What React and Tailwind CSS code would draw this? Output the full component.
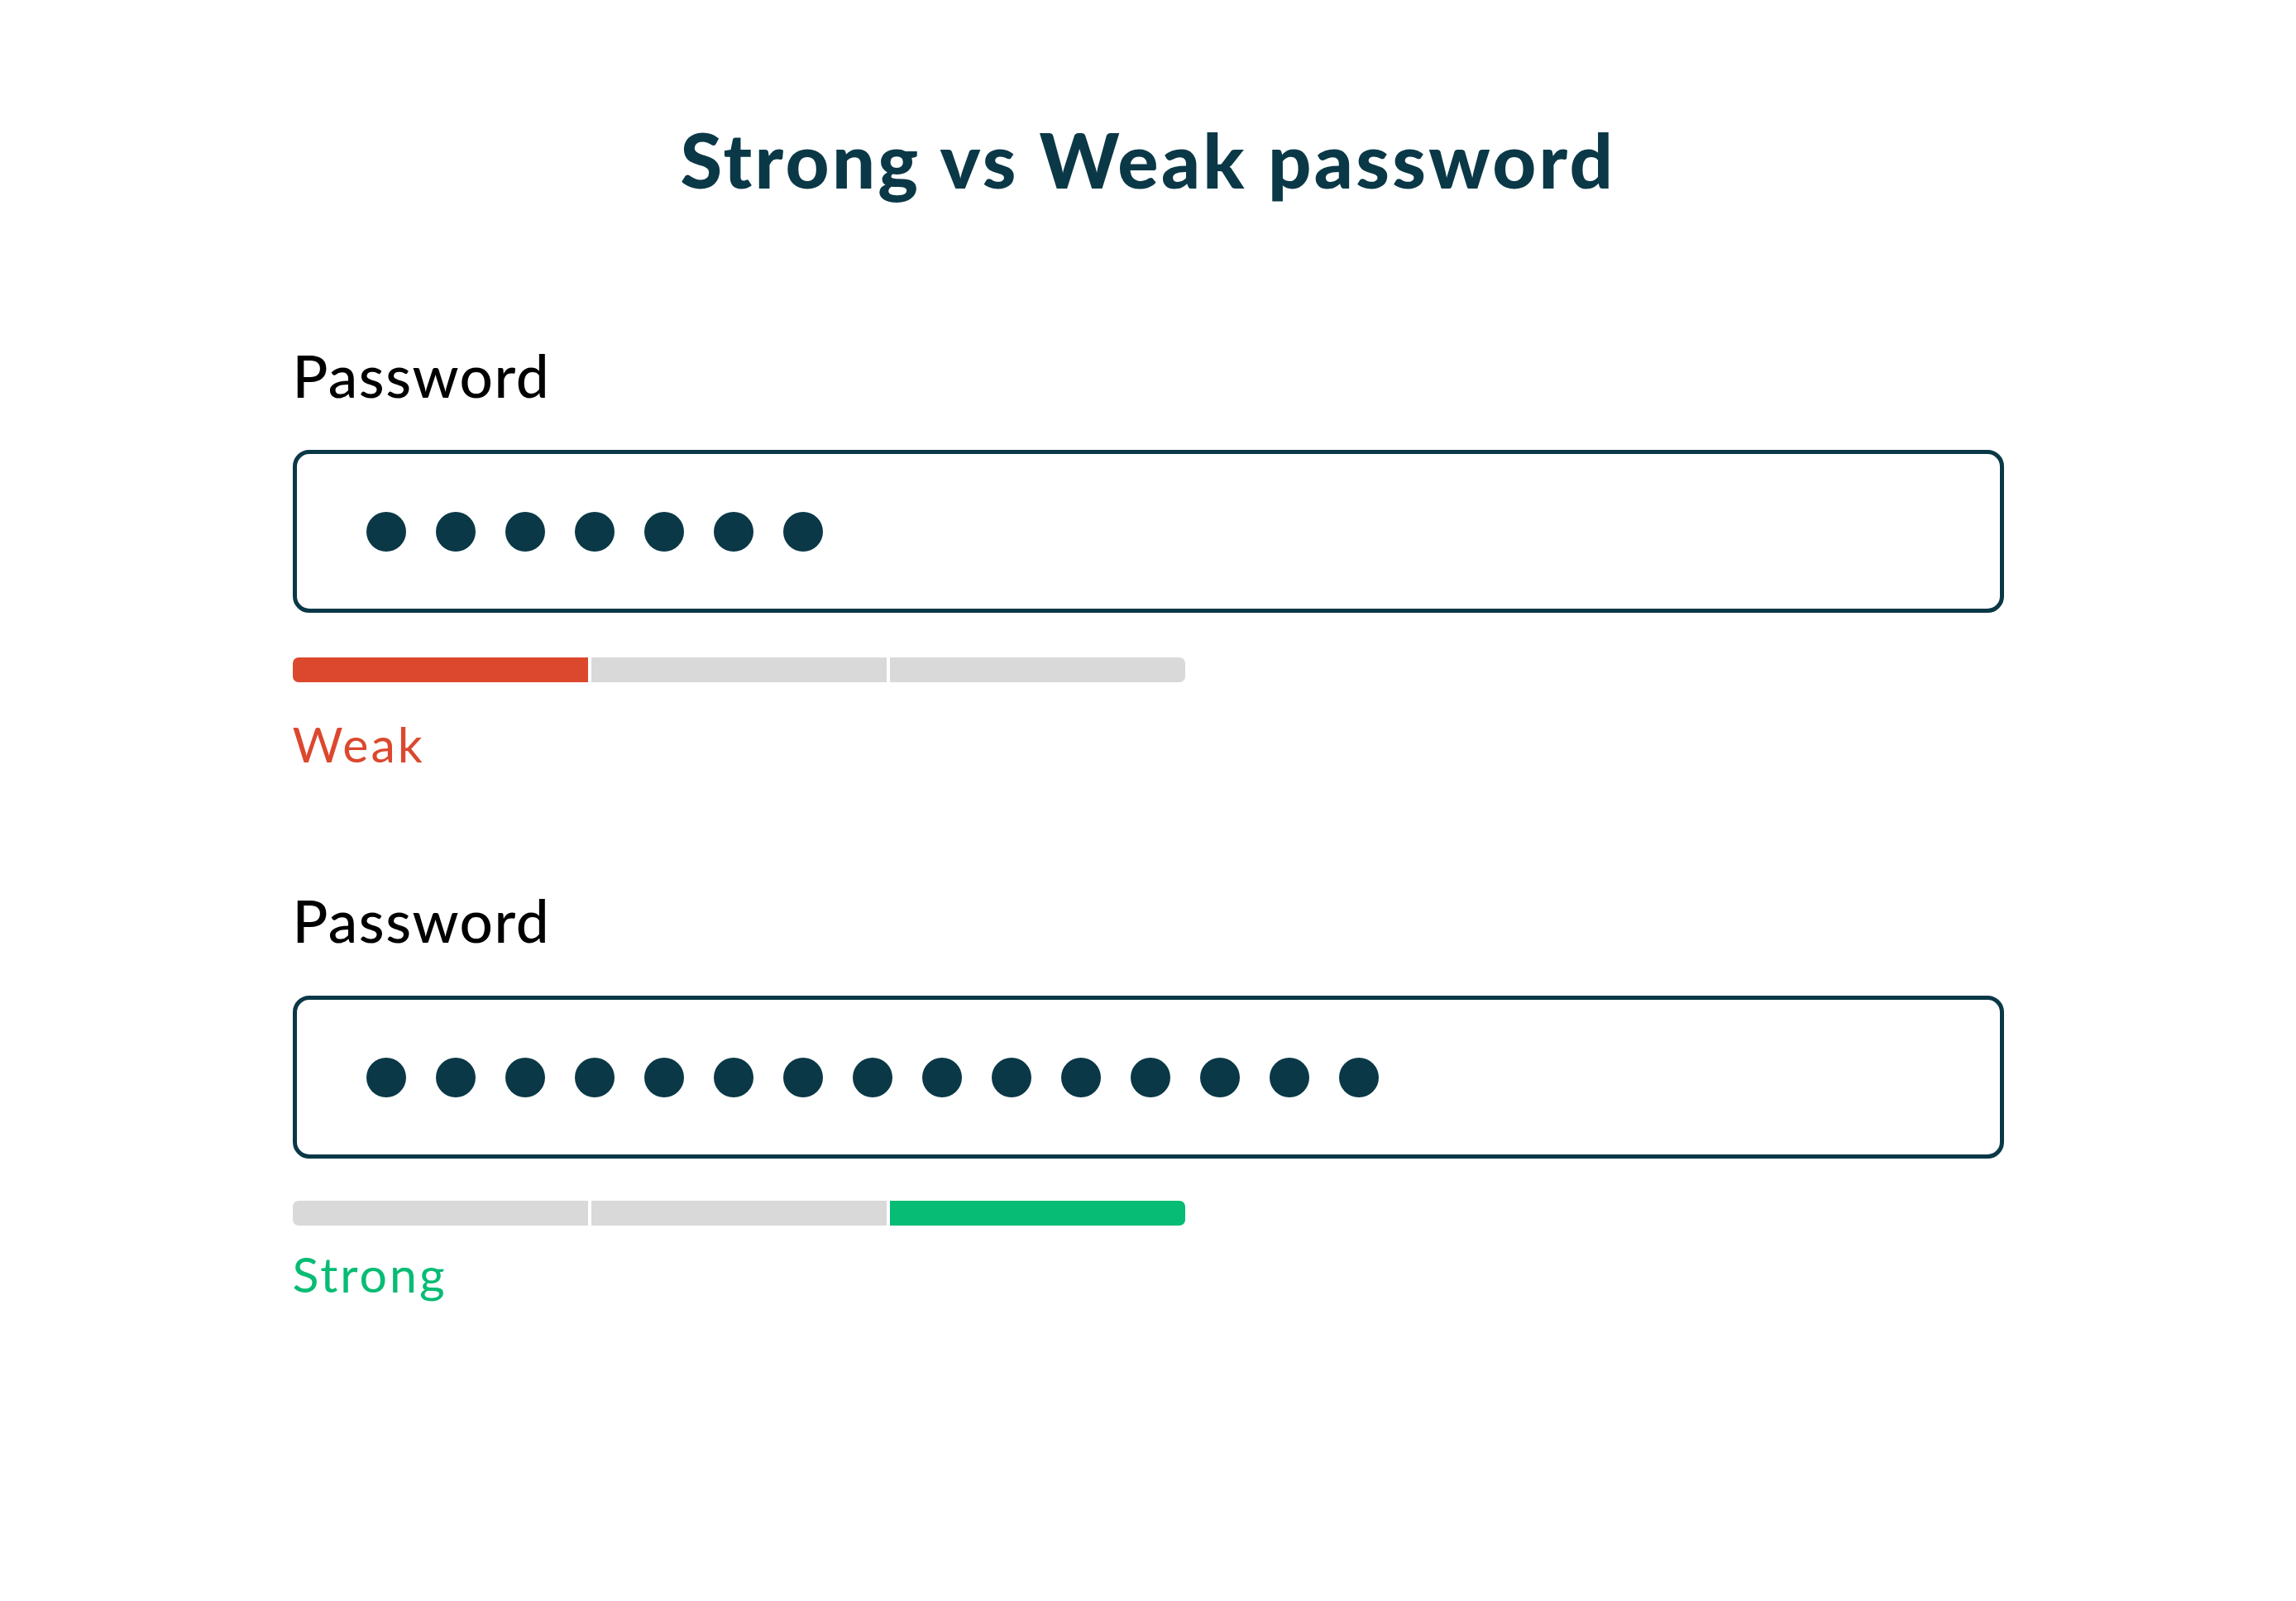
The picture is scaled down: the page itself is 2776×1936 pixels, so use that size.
import React from 'react';

// Strength meter: three segments, one lit depending on the level
function StrengthBar({ level }) {
    const colors = {
        weak: 'bg-[#db482e]',
        strong: 'bg-[#07bc74]',
    };
    const lit = level === 'weak' ? 0 : 2;

    return (
        <div className="flex gap-[4px] h-[30px] w-[1079px]">
            {[0, 1, 2].map((i) => (
                <div
                    key={i}
                    className={`flex-1 ${i === 0 ? 'rounded-l-[7px]' : ''} ${i === 2 ? 'rounded-r-[7px]' : ''} ${
                        i === lit ? colors[level] : 'bg-[#d9d9d9]'
                    }`}
                />
            ))}
        </div>
    );
}

function PasswordField({ count }) {
    return (
        <div className="h-[197px] w-full rounded-[20px] border-[5px] border-[#0a3847] flex items-center pl-[84px] gap-[36px]">
            {Array.from({ length: count }).map((_, i) => (
                <span key={i} className="w-[48px] h-[48px] rounded-full bg-[#0a3847]" />
            ))}
        </div>
    );
}

export default function App() {
    return (
        <div className="min-h-screen bg-white font-['Lato',sans-serif]">
            <div className="w-[2069px] mx-auto pt-[147px] pb-[300px]">
                <h1 className="text-[92px] leading-none font-black tracking-[3.3px] text-center text-[#0a3847]">
                    Strong vs Weak password
                </h1>

                {/* Weak example */}
                <div className="mt-[179px] text-[71px] leading-none font-medium tracking-[1.5px] text-black">Password</div>
                <div className="mt-[55px]">
                    <PasswordField count={7} />
                </div>
                <div className="mt-[54px]">
                    <StrengthBar level="weak" />
                </div>
                <div className="mt-[45px] text-[59px] leading-none tracking-[3px] text-[#db482e]">Weak</div>

                {/* Strong example */}
                <div className="mt-[148px] text-[71px] leading-none font-medium tracking-[1.5px] text-black">Password</div>
                <div className="mt-[56px]">
                    <PasswordField count={15} />
                </div>
                <div className="mt-[51px]">
                    <StrengthBar level="strong" />
                </div>
                <div className="mt-[29px] text-[59px] leading-none tracking-[3px] text-[#07bc74]">Strong</div>
            </div>
        </div>
    );
}
